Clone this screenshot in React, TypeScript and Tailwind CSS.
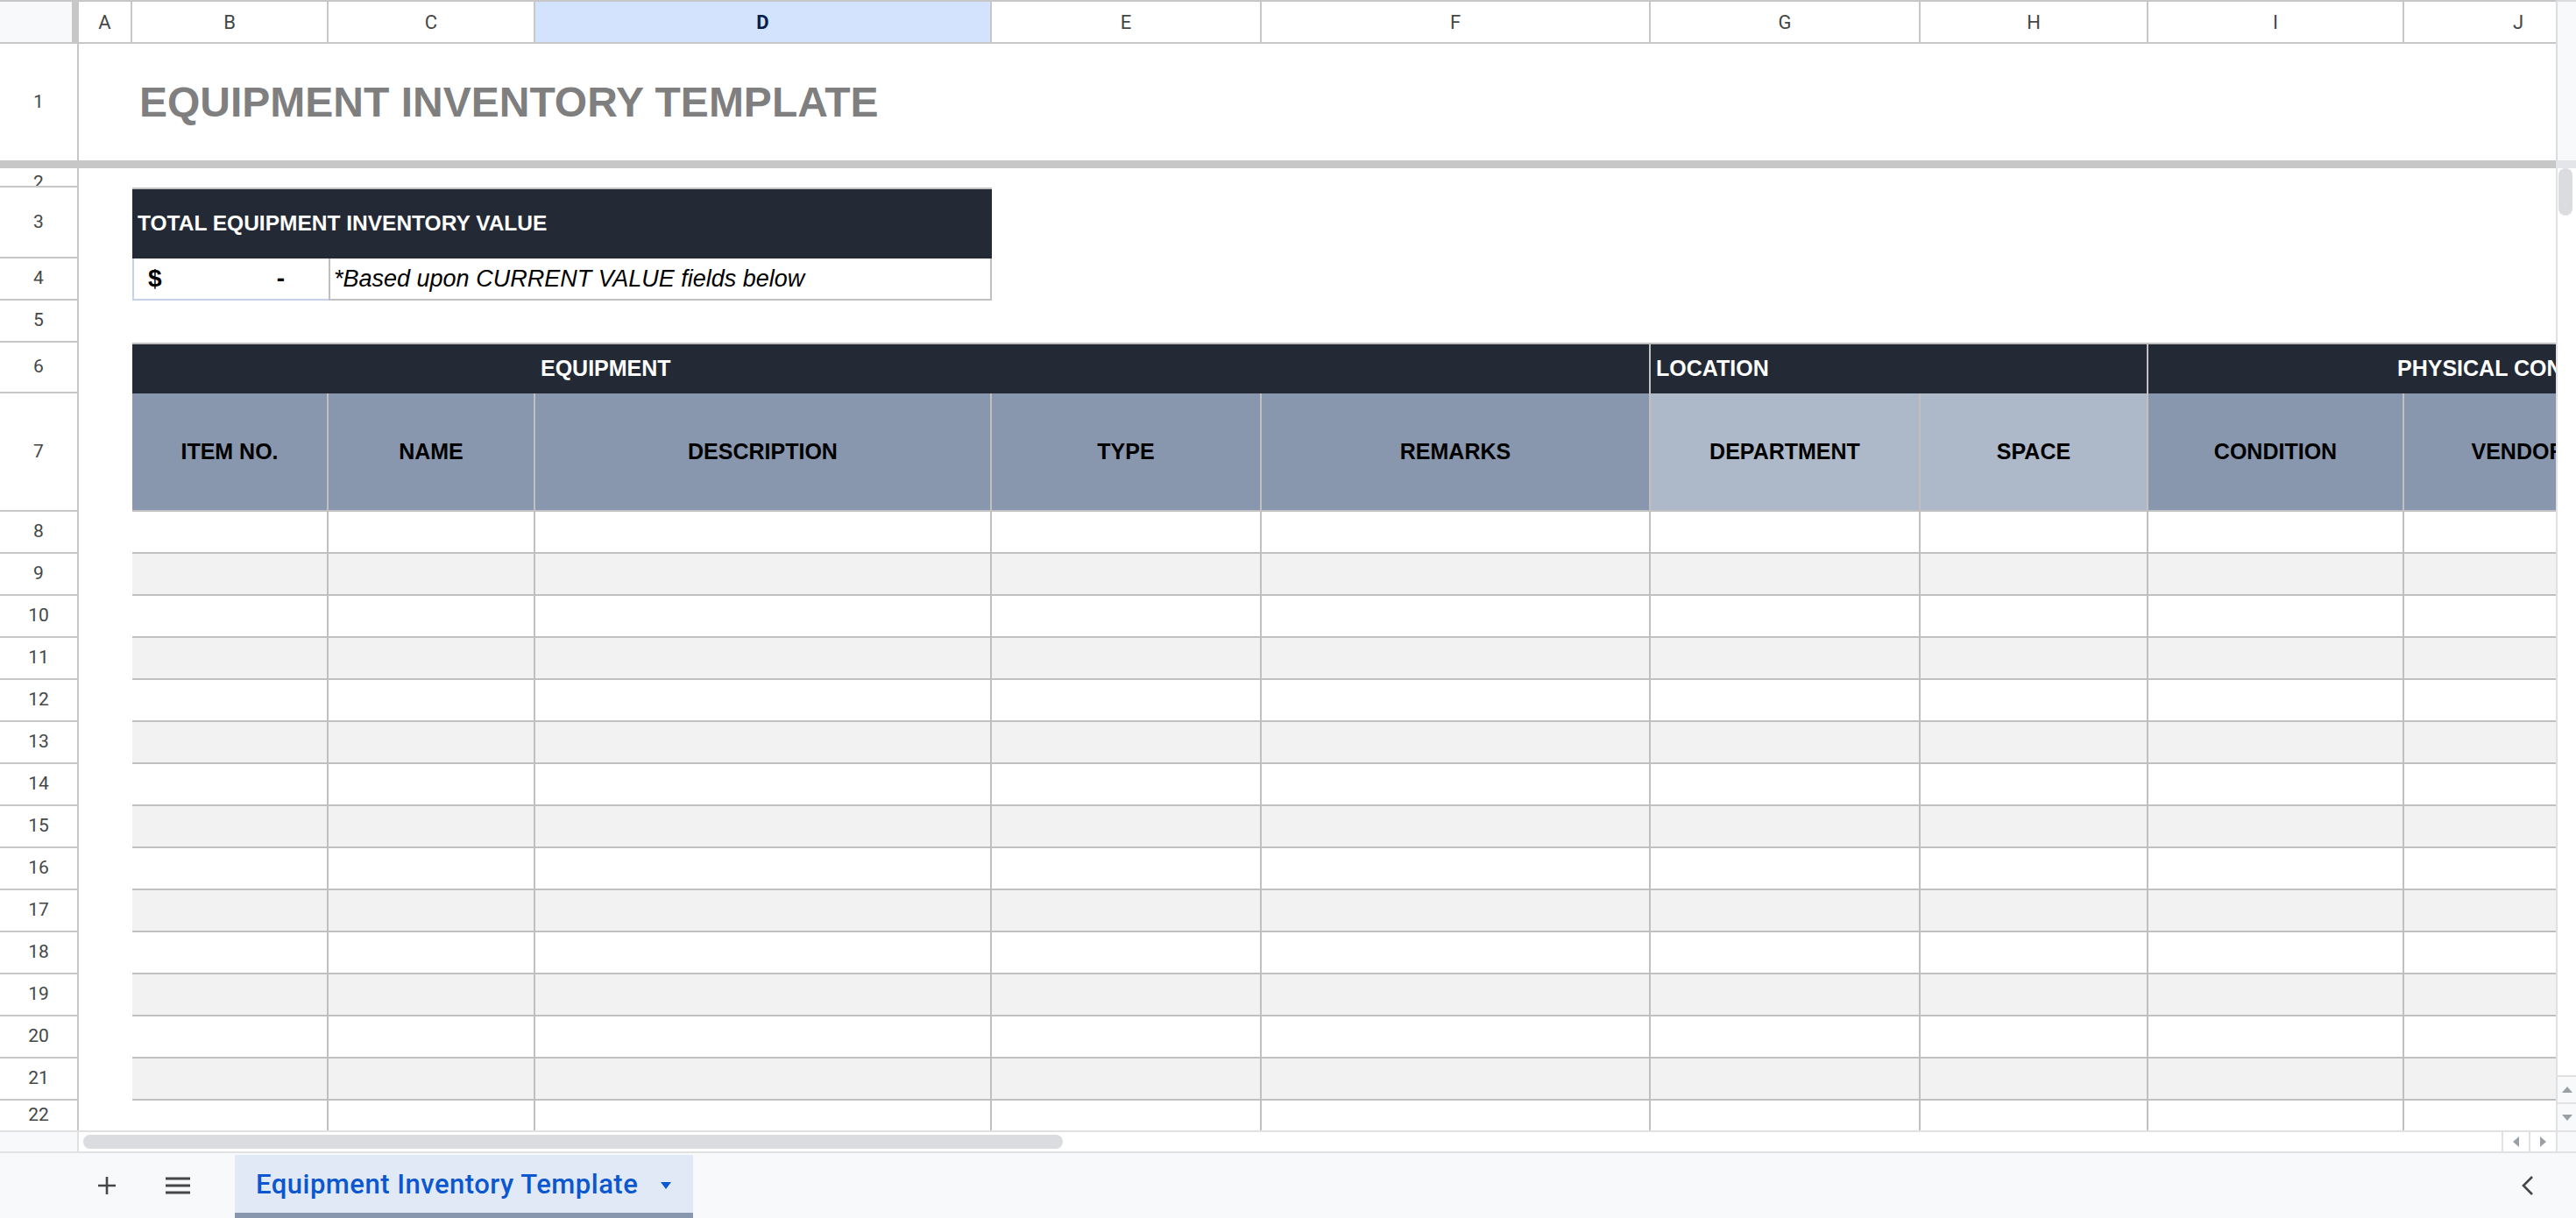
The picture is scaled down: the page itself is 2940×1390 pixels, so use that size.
import React from 'react';

const cols = [
  { key: 'A', w: 'w-[61px]' },
  { key: 'B', w: 'w-[224px]' },
  { key: 'C', w: 'w-[236px]' },
  { key: 'D', w: 'w-[521px]' },
  { key: 'E', w: 'w-[308px]' },
  { key: 'F', w: 'w-[444px]' },
  { key: 'G', w: 'w-[308px]' },
  { key: 'H', w: 'w-[260px]' },
  { key: 'I', w: 'w-[292px]' },
  { key: 'J', w: 'w-[262px]' },
];

const subHeaders = [
  { label: 'ITEM NO.', w: 'w-[224px]', bg: 'bg-[#8896ae]' },
  { label: 'NAME', w: 'w-[236px]', bg: 'bg-[#8896ae]' },
  { label: 'DESCRIPTION', w: 'w-[521px]', bg: 'bg-[#8896ae]' },
  { label: 'TYPE', w: 'w-[308px]', bg: 'bg-[#8896ae]' },
  { label: 'REMARKS', w: 'w-[444px]', bg: 'bg-[#8896ae]' },
  { label: 'DEPARTMENT', w: 'w-[308px]', bg: 'bg-[#adb8c8]' },
  { label: 'SPACE', w: 'w-[260px]', bg: 'bg-[#adb8c8]' },
  { label: 'CONDITION', w: 'w-[292px]', bg: 'bg-[#8896ae]' },
  { label: 'VENDOR', w: 'w-[262px]', bg: 'bg-[#8896ae]' },
];

const dataRows = [8, 9, 10, 11, 12, 13, 14, 15, 16, 17, 18, 19, 20, 21, 22];

const headFont = "font-['Liberation_Sans',Arial,sans-serif]";

function RowHead({ n, last }: { n: number; last?: boolean }) {
  return (
    <div
      className={`flex w-[90px] shrink-0 items-center justify-center border-r-2 border-[#c7c7c7] bg-white font-['Roboto',sans-serif] text-[21px] text-[#444746] ${
        last ? '' : 'border-b-2'
      }`}
    >
      {n}
    </div>
  );
}

function Sheet() {
  return (
    <div className="flex min-w-0 flex-1 flex-col overflow-hidden">
      {/* column letters */}
      <div className="flex h-[50px] shrink-0">
        <div className="flex w-[90px] shrink-0 border-t-2 border-b-2 border-[#c7c7c7]">
          <div className="w-[82px] bg-[#f8f9fa]" />
          <div className="w-[8px] bg-[#c7c7c7]" />
        </div>
        {cols.map((c) => (
          <div
            key={c.key}
            className={`${c.w} flex shrink-0 items-center justify-center border-t-2 border-r-2 border-b-2 border-[#c7c7c7] font-['Roboto',sans-serif] text-[22px] ${
              c.key === 'D' ? 'bg-[#d3e3fd] font-bold text-[#041e49]' : 'bg-white text-[#444746]'
            }`}
          >
            {c.key}
          </div>
        ))}
      </div>

      {/* row 1 title */}
      <div className="flex h-[133px] shrink-0">
        <RowHead n={1} last />
        <div className="w-[61px] shrink-0" />
        <div
          className={`flex items-center whitespace-nowrap pl-[8px] ${headFont} text-[48px] font-bold text-[#7f7f7f]`}
        >
          EQUIPMENT INVENTORY TEMPLATE
        </div>
      </div>

      {/* freeze bar */}
      <div className="h-[9px] shrink-0 bg-[#c7c7c7]" />

      {/* row 2 */}
      <div className="flex h-[22px] shrink-0">
        <div className="flex w-[90px] shrink-0 justify-center overflow-hidden border-r-2 border-b-2 border-[#c7c7c7] bg-white pt-[2px] font-['Roboto',sans-serif] text-[21px] leading-[28px] text-[#444746]">
          2
        </div>
      </div>

      {/* row 3 */}
      <div className="flex h-[81px] shrink-0">
        <RowHead n={3} />
        <div className="w-[61px] shrink-0" />
        <div
          className={`flex w-[981px] shrink-0 items-center border-t-2 border-[#c0c0c0] bg-[#232a35] pl-[6px] ${headFont} text-[24.5px] font-bold text-white`}
        >
          TOTAL EQUIPMENT INVENTORY VALUE
        </div>
      </div>

      {/* row 4 */}
      <div className="flex h-[48px] shrink-0">
        <RowHead n={4} />
        <div className="w-[61px] shrink-0" />
        <div
          className={`flex w-[224px] shrink-0 items-end justify-between border-l-2 border-b-2 border-[#c2d1ee] pb-[2px] pl-[16px] pr-[50px] ${headFont} text-[28px] font-bold text-black`}
        >
          <span>$</span>
          <span>-</span>
        </div>
        <div className="flex w-[757px] shrink-0 items-center border-x-2 border-b-2 border-[#c0c0c0] pl-[4px] font-['Liberation_Sans',Arial,sans-serif] text-[27px] italic text-black">
          *Based upon CURRENT VALUE fields below
        </div>
      </div>

      {/* row 5 */}
      <div className="flex h-[48px] shrink-0">
        <RowHead n={5} />
      </div>

      {/* row 6 section headers */}
      <div className="flex h-[58px] shrink-0">
        <RowHead n={6} />
        <div className="w-[61px] shrink-0" />
        <div
          className={`flex w-[1733px] shrink-0 items-center border-t-2 border-r-2 border-[#c0c0c0] bg-[#232a35] pl-[466px] ${headFont} text-[25px] font-bold text-white`}
        >
          EQUIPMENT
        </div>
        <div
          className={`flex w-[568px] shrink-0 items-center border-t-2 border-r-2 border-[#c0c0c0] bg-[#232a35] pl-[6px] ${headFont} text-[25px] font-bold text-white`}
        >
          LOCATION
        </div>
        <div
          className={`flex w-[554px] shrink-0 items-center overflow-hidden whitespace-nowrap border-t-2 border-[#c0c0c0] bg-[#232a35] pl-[284px] ${headFont} text-[25px] font-bold text-white`}
        >
          PHYSICAL CONDITION
        </div>
      </div>

      {/* row 7 column headers */}
      <div className="flex h-[135px] shrink-0">
        <RowHead n={7} />
        <div className="w-[61px] shrink-0" />
        {subHeaders.map((s) => (
          <div
            key={s.label}
            className={`${s.w} ${s.bg} flex shrink-0 items-center justify-center whitespace-nowrap border-r-2 border-b-2 border-[#c0c0c0] ${headFont} text-[25px] font-bold text-black`}
          >
            {s.label}
          </div>
        ))}
      </div>

      {/* data rows */}
      {dataRows.map((r) => (
        <div key={r} className={`flex shrink-0 ${r === 22 ? 'h-[34px]' : 'h-[48px]'}`}>
          <RowHead n={r} last={r === 22} />
          <div className="w-[61px] shrink-0 bg-white" />
          {cols.slice(1).map((c) => (
            <div
              key={c.key}
              className={`${c.w} shrink-0 border-r-2 border-[#c0c0c0] ${r === 22 ? '' : 'border-b-2'} ${
                r % 2 === 1 ? 'bg-[#f2f2f2]' : 'bg-white'
              }`}
            />
          ))}
        </div>
      ))}
    </div>
  );
}

function Tri({ dir }: { dir: 'up' | 'down' | 'left' | 'right' }) {
  const pts = {
    up: '0,7 6,0 12,7',
    down: '0,0 12,0 6,7',
    left: '7,0 7,12 0,6',
    right: '0,0 0,12 7,6',
  }[dir];
  const box = dir === 'up' || dir === 'down' ? '0 0 12 7' : '0 0 7 12';
  return (
    <svg viewBox={box} className={dir === 'up' || dir === 'down' ? 'h-[7px] w-[12px]' : 'h-[12px] w-[7px]'}>
      <polygon points={pts} fill="#9aa0a6" />
    </svg>
  );
}

export default function App() {
  return (
    <div className="flex h-[1390px] w-[2940px] flex-col overflow-hidden bg-white">
      <div className="flex h-[1290px] shrink-0">
        <Sheet />
        {/* vertical scrollbar */}
        <div className="flex w-[23px] shrink-0 flex-col">
          <div className="h-[183px] shrink-0 border-t-2 border-l-2 border-[#dadce0] bg-[#f8f9fa]" />
          <div className="h-[9px] shrink-0 bg-[#e3e5e8]" />
          <div className="flex flex-1 flex-col border-l-2 border-[#e1e1e1] bg-white">
            <div className="ml-[1px] h-[54px] w-[16px] rounded-full bg-[#dadce0]" />
          </div>
          <div className="flex h-[31px] shrink-0 items-center justify-center border-l-2 border-t-2 border-[#e1e1e1] bg-[#f8f9fa]">
            <Tri dir="up" />
          </div>
          <div className="flex h-[32px] shrink-0 items-center justify-center border-l-2 border-t-2 border-[#e1e1e1] bg-[#f8f9fa]">
            <Tri dir="down" />
          </div>
        </div>
      </div>

      {/* horizontal scrollbar */}
      <div className="flex h-[26px] shrink-0 border-t-2 border-b-2 border-[#e1e1e1]">
        <div className="w-[90px] shrink-0 border-r-2 border-[#e1e1e1] bg-[#f8f9fa]" />
        <div className="flex flex-1 items-center bg-white">
          <div className="ml-[5px] h-[16px] w-[1118px] rounded-full bg-[#dadce0]" />
        </div>
        <div className="flex w-[31px] shrink-0 items-center justify-center border-l-2 border-[#e1e1e1] bg-white">
          <Tri dir="left" />
        </div>
        <div className="flex w-[31px] shrink-0 items-center justify-center border-l-2 border-[#e1e1e1] bg-white">
          <Tri dir="right" />
        </div>
        <div className="w-[23px] shrink-0 border-l-2 border-[#e1e1e1] bg-[#f8f9fa]" />
      </div>

      {/* sheet tabs */}
      <div className="flex flex-1 items-stretch bg-[#f8f9fa]">
        <div className="flex w-[268px] shrink-0 items-center">
          <div className="ml-[110px] flex h-[24px] w-[24px] items-center justify-center">
            <svg viewBox="0 0 24 24" className="h-[24px] w-[24px]">
              <path d="M12 2v20M2 12h20" stroke="#444746" strokeWidth="2.6" fill="none" />
            </svg>
          </div>
          <div className="ml-[55px] flex h-[24px] w-[28px] items-center justify-center">
            <svg viewBox="0 0 28 20" className="h-[20px] w-[28px]">
              <path d="M0 2h28M0 10h28M0 18h28" stroke="#444746" strokeWidth="2.8" fill="none" />
            </svg>
          </div>
        </div>
        <div className="mt-[2px] flex w-[523px] shrink-0 flex-col bg-[#e1e9f7]">
          <div className="flex flex-1 items-center pl-[24px] pt-[3px]">
            <span className="font-['Roboto',sans-serif] text-[31px] font-medium tracking-[0.5px] text-[#0b57d0]">
              Equipment Inventory Template
            </span>
            <svg viewBox="0 0 12 8" className="ml-[26px] h-[8px] w-[12px]">
              <polygon points="0,0 12,0 6,8" fill="#0b57d0" />
            </svg>
          </div>
          <div className="h-[6px] bg-[#8896ae]" />
        </div>
        <div className="flex flex-1 items-center justify-end pr-[48px]">
          <svg viewBox="0 0 14 24" className="h-[24px] w-[14px]">
            <polyline points="12,2 2,12 12,22" stroke="#444746" strokeWidth="2.6" fill="none" />
          </svg>
        </div>
      </div>
    </div>
  );
}
